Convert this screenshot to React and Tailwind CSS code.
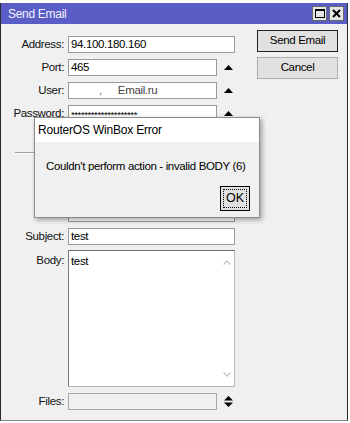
import React from "react";

const FONT = "font-['Liberation_Sans',Arial,sans-serif]";
const TXT = "text-[11.5px] tracking-[-0.35px] leading-none";

function UpTri() {
  return (
    <svg width="9" height="5" viewBox="0 0 9 5" className="block">
      <polygon points="4.5,0 9,5 0,5" fill="#000" />
    </svg>
  );
}

function Spinner() {
  return (
    <svg width="9" height="11" viewBox="0 0 9 11" className="block">
      <polygon points="4.5,0 9,4.5 0,4.5" fill="#000" />
      <polygon points="0,6.5 9,6.5 4.5,11" fill="#000" />
    </svg>
  );
}

function Row({ label, children, wide = true, arrow = null, mt = "mt-[6px]" }) {
  return (
    <div className={`flex items-center h-[17px] ${mt}`}>
      <div className={`w-[63px] text-right ${TXT} text-[#111]`}>{label}</div>
      <div
        className={`ml-[4px] h-[17px] ${wide ? "w-[167px]" : "w-[149px]"} bg-white border border-[#9a9a9a] flex items-center pl-[2px] ${TXT} text-black overflow-hidden whitespace-nowrap`}
      >
        {children}
      </div>
      {arrow && <div className="ml-[7px]">{arrow}</div>}
    </div>
  );
}

export default function App() {
  return (
    <div className={`relative w-[350px] h-[423px] bg-white overflow-hidden ${FONT}`}>
      {/* window */}
      <div className="mt-[3px] w-[348px] h-[418px] flex flex-col border-l border-r border-b border-l-[#2a2a2a] border-r-[#2a2a2a] border-b-[#8a8a8a]">
        {/* title bar */}
        <div className="h-[21px] bg-[#5a5dc6] flex items-center pl-[7px] pr-[3px]">
          <div className="text-[#f4f4ff] text-[12px] tracking-[-0.3px] leading-none">Send Email</div>
          <div className="ml-auto flex gap-[2px]">
            <div className="w-[15px] h-[15px] bg-[#e6e6e6] border border-[#6a6a6a] flex items-center justify-center">
              <div className="w-[10px] h-[9px] border border-black border-t-2"></div>
            </div>
            <div className="w-[15px] h-[15px] bg-[#e6e6e6] border border-[#6a6a6a] flex items-center justify-center">
              <svg width="9" height="9" viewBox="0 0 9 9">
                <path d="M1 1 L8 8 M8 1 L1 8" stroke="#000" strokeWidth="2" />
              </svg>
            </div>
          </div>
        </div>
        {/* content */}
        <div className="flex-1 bg-[#f0f0f0] flex">
          <div className="w-[240px] flex flex-col pt-[6px]">
            <Row label="Address:">94.100.180.160</Row>
            <Row label="Port:" wide={false} arrow={<UpTri />}>465</Row>
            <Row label="User:" wide={false} arrow={<UpTri />}>
              <span className="ml-[28px] text-[#777]">,</span>
              <span className="ml-[16px] text-[#444]">Email.ru</span>
            </Row>
            <Row label="Password:" wide={false} arrow={<UpTri />}>
              <span className="text-[9.5px] tracking-[-0.4px] leading-none pt-[2px]">********************</span>
            </Row>
            <div className="mt-[30px] ml-[14px] w-[221px] h-[2px] border-t border-t-[#a0a0a0] border-b border-b-white"></div>
            <Row label="" mt="mt-[5px]"></Row>
            <Row label=""></Row>
            <Row label=""></Row>
            <Row label="Subject:">test</Row>
            {/* body */}
            <div className="flex mt-[5px]">
              <div className={`w-[63px] text-right ${TXT} text-[#111] pt-[5px]`}>Body:</div>
              <div className="ml-[4px] w-[167px] h-[137px] bg-white border border-[#b8b8b8] border-t-[#6a6a6a] border-l-[#7a7a7a] flex">
                <div className={`flex-1 pl-[2px] pt-[5px] ${TXT} text-black`}>test</div>
                <div className="w-[14px] flex flex-col items-center justify-between py-[9px]">
                  <svg width="8" height="5" viewBox="0 0 8 5">
                    <path d="M0.5 4.5 L4 1 L7.5 4.5" stroke="#c4c4c4" strokeWidth="1.3" fill="none" />
                  </svg>
                  <svg width="8" height="5" viewBox="0 0 8 5">
                    <path d="M0.5 0.5 L4 4 L7.5 0.5" stroke="#c4c4c4" strokeWidth="1.3" fill="none" />
                  </svg>
                </div>
              </div>
            </div>
            <div className="flex items-center h-[17px] mt-[6px]">
              <div className={`w-[63px] text-right ${TXT} text-[#111]`}>Files:</div>
              <div className="ml-[4px] h-[17px] w-[149px] bg-[#f0f0f0] border border-[#a8a8a8]"></div>
              <div className="ml-[7px]"><Spinner /></div>
            </div>
          </div>
          <div className="ml-[16px] flex flex-col pt-[6px]">
            <div className={`w-[81px] h-[22px] bg-[#e1e1e1] border border-[#222] flex items-center justify-center ${TXT} text-black`}>
              Send Email
            </div>
            <div className={`mt-[5px] w-[81px] h-[22px] bg-[#e1e1e1] border border-[#adadad] flex items-center justify-center ${TXT} text-black`}>
              Cancel
            </div>
          </div>
        </div>
      </div>

      {/* error dialog */}
      <div className="absolute left-[34px] top-[117px] w-[226px] h-[101px] border border-[#8c8c8c] bg-[#f0f0f0] shadow-[2px_2px_5px_rgba(0,0,0,0.35)] flex flex-col">
        <div className="h-[24px] bg-white flex items-center pl-[3px] text-[12px] tracking-[-0.2px] leading-none text-black">
          RouterOS WinBox Error
        </div>
        <div className={`pl-[11px] mt-[19px] ${TXT} text-black whitespace-nowrap`}>
          Couldn't perform action - invalid BODY (6)
        </div>
        <div className="mt-auto mb-[6px] mr-[9px] self-end w-[30px] h-[25px] bg-[#e1e1e1] border border-black p-[2px]">
          <div className="w-full h-full border border-dotted border-black flex items-center justify-center text-[12.5px] leading-none text-black">
            OK
          </div>
        </div>
      </div>
    </div>
  );
}
